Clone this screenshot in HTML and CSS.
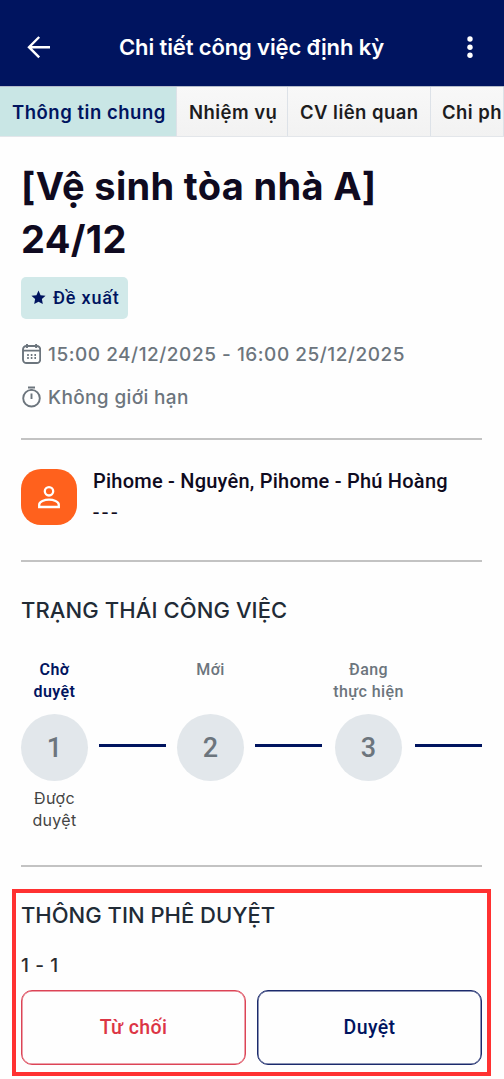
FILE: index.html
```html
<!DOCTYPE html>
<html lang="vi">
<head>
<meta charset="utf-8">
<title>Chi tiết công việc định kỳ</title>
<link rel="stylesheet" href="styles.css">
</head>
<body>
<header class="topbar">
  <svg class="back" width="24" height="24" viewBox="0 0 24 24"><path d="M23 12.2H2M12.2 2 2 12.2l10.2 10.2"/></svg>
  <h1 class="topbar-title"><span>Chi tiết công việc định kỳ</span></h1>
  <svg class="more" width="8" height="24" viewBox="0 0 8 24"><circle cx="4" cy="4" r="2.7"/><circle cx="4" cy="12.2" r="2.7"/><circle cx="4" cy="20.3" r="2.7"/></svg>
</header>
<nav class="tabs">
  <a class="tab tab-general active"><span>Thông tin chung</span></a>
  <a class="tab tab-tasks"><span>Nhiệm vụ</span></a>
  <a class="tab tab-related"><span>CV liên quan</span></a>
  <a class="tab tab-cost"><span>Chi ph</span></a>
</nav>
<main class="content">
  <h2 class="title">[Vệ sinh tòa nhà A]<br>24/12</h2>
  <div class="badge">
    <svg width="15" height="15" viewBox="0 0 16 16"><path d="M8 .6l2.2 4.9 5.3.6-3.9 3.6 1 5.3L8 12.4l-4.6 2.6 1-5.3L.5 6.100l5.300-.6z"/></svg>
    <span>Đề xuất</span>
  </div>
  <div class="meta meta-date">
    <svg width="20" height="22" viewBox="0 0 20 22"><rect x="2" y="3" width="17.200" height="17" rx="3.500"/><path d="M2 7.600h17.200M6 1v4M15.100 1v4"/><path class="dots" d="M6.200 12h1.600M9.800 12h1.600M13.400 12h1.600M6.200 15h1.600M9.800 15h1.600M13.400 15h1.600"/></svg>
    <span>15:00 24/12/2025 - 16:00 25/12/2025</span>
  </div>
  <div class="meta meta-limit">
    <svg width="20" height="22" viewBox="0 0 20 22"><circle cx="10.500" cy="12.200" r="8.300"/><path d="M7 1.500h7M10.500 3v1.500M10.500 7.500v5.500"/></svg>
    <span>Không giới hạn</span>
  </div>
  <hr class="rule">
  <section class="people">
    <div class="avatar">
      <svg width="24" height="24" viewBox="0 0 24 24"><circle cx="12" cy="6.300" r="4.200"/><path d="M2.200 22v-2.300c0-3 5.400-5 9.800-5s9.800 2 9.800 5v2.300z"/></svg>
    </div>
    <div class="people-text">
      <p class="people-name">Pihome - Nguyên, Pihome - Phú Hoàng</p>
      <p class="people-sub">---</p>
    </div>
  </section>
  <hr class="rule">
  <h3 class="heading heading-status">TRẠNG THÁI CÔNG VIỆC</h3>
  <div class="steps">
    <div class="step current">
      <div class="step-label">Chờ<br>duyệt</div>
      <div class="step-num">1</div>
      <div class="step-note">Được<br>duyệt</div>
    </div>
    <div class="link"></div>
    <div class="step">
      <div class="step-label">Mới</div>
      <div class="step-num">2</div>
    </div>
    <div class="link"></div>
    <div class="step wide">
      <div class="step-label">Đang<br>thực hiện</div>
      <div class="step-num">3</div>
    </div>
    <div class="link"></div>
  </div>
  <hr class="rule">
  <section class="approval">
    <h3 class="heading heading-approval">THÔNG TIN PHÊ DUYỆT</h3>
    <p class="count">1 - 1</p>
    <div class="actions">
      <button class="btn reject">Từ chối</button>
      <button class="btn approve">Duyệt</button>
    </div>
    <div class="highlight"></div>
  </section>
</main>
</body>
</html>
```
FILE: styles.css
```css
* { box-sizing: border-box; }
body {
  margin: 0;
  width: 504px;
  height: 1079px;
  overflow: hidden;
  background: #fefefe;
  font-family: Inter, "Noto Sans", sans-serif;
  white-space: nowrap;
}
h1, h2, h3, p { margin: 0; }

.topbar {
  display: flex;
  align-items: center;
  height: 86px;
  padding: 8px 30px 0 27px;
  background: #00145f;
}
.back { fill: none; stroke: #fff; stroke-width: 2.4; }
.more { fill: #fff; }
.topbar-title {
  flex: 1;
  padding-left: 68px;
  color: #fff;
  font-size: 22px;
  font-weight: 600;
  line-height: 28px;
  letter-spacing: -.12px;
}

.tabs {
  display: flex;
  height: 51px;
  border-top: 1px solid #b4bccb;
  border-bottom: 1px solid #e3e6ea;
}
.tab {
  flex: none;
  padding-left: 12px;
  border-right: 1px solid #dde2e8;
  background: linear-gradient(#f8f8f8, #f2f2f2);
  color: #1c1c1e;
  font-size: 18.500px;
  font-weight: 600;
  line-height: 50px;
  letter-spacing: .45px;
}
.tab.active { background: #c9e6e5; color: #00145f; letter-spacing: .52px; }
.tab-general { width: 177px; }
.tab-tasks { width: 111px; }
.tab-related { width: 143px; }
.tab-cost { width: 73px; padding-left: 11px; }

.content { padding: 23px 22px 0 21px; }
.title {
  color: #0f0a20;
  font-size: 38px;
  font-weight: 700;
  line-height: 53px;
  letter-spacing: .33px;
}
.badge {
  display: flex;
  align-items: center;
  gap: 7px;
  width: 107px;
  height: 42px;
  margin-top: 11px;
  padding: 0 0 1px 10px;
  border-radius: 5px;
  background: #d1e9e9;
  color: #00145f;
  font: 500 18px Roboto, sans-serif;
  letter-spacing: .8px;
}
.badge svg { fill: #00145f; }

.meta {
  display: flex;
  align-items: center;
  gap: 7px;
  height: 24px;
  color: #6c757d;
  font-size: 19px;
  font-weight: 500;
  letter-spacing: .53px;
}
.meta svg { fill: none; stroke: #6c757d; stroke-width: 1.9; }
.meta-date { margin-top: 23px; }
.meta-limit { margin-top: 19px; letter-spacing: .36px; }
.rule { height: 2px; margin: 0; border: 0; background: #c3c3c3; }
.meta-limit + .rule { margin-top: 29px; }

.people { display: flex; gap: 16px; height: 120px; padding-top: 29px; }
.avatar {
  display: flex;
  align-items: center;
  justify-content: center;
  width: 56px;
  height: 56px;
  border-radius: 20px;
  background: #ff611d;
}
.avatar svg { fill: none; stroke: #fff; stroke-width: 2.3; }
.people-text { margin-top: -1px; color: #0f0a20; font: 500 20px/26px Roboto, sans-serif; }
.people-name { letter-spacing: .23px; }
.people-sub { padding-top: 6px; font-size: 22px; font-weight: 400; letter-spacing: 3px; }

.heading { color: #212b36; font-size: 22px; font-weight: 500; line-height: 28px; }
.heading-status { margin-top: 34px; letter-spacing: .1px; }
.heading-approval { letter-spacing: 0; }

.steps { display: flex; gap: 11px; height: 207px; margin-top: 34px; }
.step { display: flex; flex-direction: column; align-items: center; width: 67px; }
.step.wide { width: 71px; }
.step-label {
  height: 56px;
  padding-top: 1px;
  color: #6c757d;
  font: 500 16px/22px Roboto, sans-serif;
  letter-spacing: .4px;
  text-align: center;
}
.current .step-label { color: #00145f; font-weight: 600; }
.step-num {
  width: 67px;
  height: 67px;
  border-radius: 50%;
  background: #e2e7eb;
  color: #6c757d;
  font: 500 27px/69px Roboto, sans-serif;
  text-align: center;
}
.step-note { padding-top: 6px; color: #444; font-size: 16px; line-height: 22px; letter-spacing: .3px; text-align: center; }
.link { width: 67px; height: 3px; margin-top: 86px; background: #00145f; }

.approval { position: relative; padding-top: 34px; }
.count { margin-top: 24px; color: #2b2b2f; font-size: 19px; font-weight: 500; line-height: 26px; letter-spacing: .6px; }
.actions { display: flex; gap: 11px; margin-top: 11px; }
.btn {
  flex: 1;
  height: 75px;
  padding: 0;
  border: 1px solid;
  border-radius: 11px;
  background: none;
  font: 500 19.500px Roboto, sans-serif;
  letter-spacing: .4px;
}
.reject { border-color: #dc4456; box-shadow: inset 0 0 0 .5px #dc4456; color: #dc3545; }
.approve { border-color: #1b2a6c; box-shadow: inset 0 0 0 .5px #1b2a6c; color: #00145f; }
.highlight {
  position: absolute;
  top: 22px;
  left: -9px;
  width: 479px;
  height: 187px;
  border: 4px solid #ff3131;
  pointer-events: none;
}
```
